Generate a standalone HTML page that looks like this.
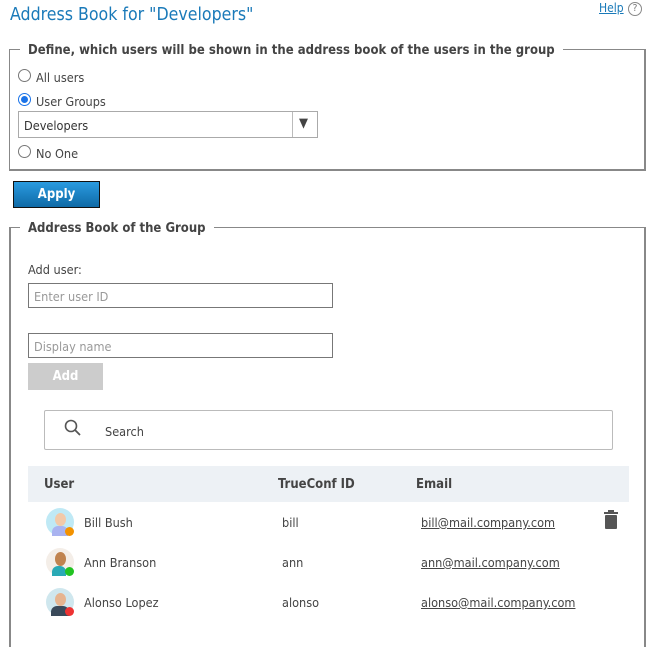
<!DOCTYPE html>
<html><head><meta charset="utf-8"><style>
*{box-sizing:border-box;margin:0;padding:0}
body{width:656px;height:624px;overflow:hidden;background:#fff;font-family:"DejaVu Sans Condensed","Liberation Sans",sans-serif;font-size:12.6px;color:#444;position:relative}
.a{position:absolute;white-space:nowrap}
.fs{position:absolute;border:1px solid #888;border-width:2px 2px 2px 2px;border-color:#888}
.lg{position:absolute;background:#fff;padding:0 8px;font-weight:bold;font-size:13px;color:#444}
.rad{position:absolute;width:13px;height:13px;border:1px solid #777;border-radius:50%;background:#fff}
.inp{position:absolute;border:1px solid #777;height:25px;color:#999;padding:5px 5px;font-size:12.6px}
.av{position:absolute;width:28px;height:28px;border-radius:50%}
.dot{position:absolute;width:9px;height:9px;border-radius:50%}
.em{text-decoration:underline;color:#444}
</style></head><body>
<div class="a" style="left:10px;top:5px;font-size:17.6px;color:#1a7ab9">Address Book for "Developers"</div>
<div class="a" style="left:599px;top:1px;color:#1a7ab9;text-decoration:underline;font-size:12px">Help</div>
<div class="a" style="left:628px;top:2px;width:14px;height:14px;border:1px solid #888;border-radius:50%;font-size:10px;text-align:center;line-height:12px;color:#777">?</div>

<div class="fs" style="left:9px;top:49px;width:637px;height:122px;border-width:1px 2px 2px 1px"></div>
<div class="lg" style="left:20px;top:43px">Define, which users will be shown in the address book of the users in the group</div>
<div class="rad" style="left:18px;top:69px"></div><div class="a" style="left:36px;top:70px">All users</div>
<div class="rad" style="left:18px;top:93px;border-color:#1a73e8"><div style="margin:2px;width:7px;height:7px;border-radius:50%;background:#1a73e8"></div></div><div class="a" style="left:36px;top:94px">User Groups</div>
<div class="a" style="left:18px;top:111px;width:300px;height:27px;border:1px solid #aaa"><span style="position:absolute;left:5px;top:6px;color:#333">Developers</span><div style="position:absolute;left:273px;top:0;width:1px;height:25px;background:#bbb"></div><span style="position:absolute;left:280px;top:4px;font-size:13px;color:#444">▼</span></div>
<div class="rad" style="left:18px;top:145px"></div><div class="a" style="left:36px;top:146px">No One</div>

<div class="a" style="left:13px;top:181px;width:87px;height:27px;border:1px solid #111;background:linear-gradient(#2a9be0,#0f6aa6);color:#fff;font-weight:bold;font-size:13px;text-align:center;line-height:25px">Apply</div>

<div class="fs" style="left:9px;top:227px;width:637px;height:420px;border-width:1px 2px 0 2px"></div>
<div class="lg" style="left:20px;top:221px">Address Book of the Group</div>
<div class="a" style="left:28px;top:262px">Add user:</div>
<div class="inp" style="left:28px;top:283px;width:305px">Enter user ID</div>
<div class="inp" style="left:28px;top:333px;width:305px">Display name</div>
<div class="a" style="left:28px;top:363px;width:75px;height:27px;background:#ccc;color:#fff;font-weight:bold;font-size:13px;text-align:center;line-height:27px">Add</div>
<div class="a" style="left:44px;top:410px;width:569px;height:40px;border:1px solid #bbb;border-radius:2px"></div>
<svg class="a" style="left:63px;top:418px" width="20" height="20" viewBox="0 0 20 20"><circle cx="8" cy="8" r="5.5" fill="none" stroke="#555" stroke-width="1.6"/><path d="M12 12L17 17" stroke="#555" stroke-width="1.8"/></svg>
<div class="a" style="left:105px;top:424px">Search</div>

<div class="a" style="left:28px;top:466px;width:601px;height:36px;background:#edf1f5"></div>
<div class="a" style="left:44px;top:477px;font-weight:bold;font-size:13px">User</div>
<div class="a" style="left:278px;top:477px;font-weight:bold;font-size:13px">TrueConf ID</div>
<div class="a" style="left:416px;top:477px;font-weight:bold;font-size:13px">Email</div>

<div class="av" style="left:46px;top:508px;background:#bfe9f5"><div style="position:absolute;left:9px;top:5px;width:11px;height:13px;border-radius:50%;background:#f2c9a8"></div><div style="position:absolute;left:6px;top:18px;width:16px;height:10px;border-radius:6px 6px 0 0;background:#a9b3f0"></div></div><div class="dot" style="left:65px;top:527px;background:#f39200"></div>
<div class="a" style="left:84px;top:515px">Bill Bush</div><div class="a" style="left:282px;top:515px">bill</div><div class="a em" style="left:421px;top:515px">bill@mail.company.com</div>
<svg class="a" style="left:603px;top:510px" width="16" height="19" viewBox="0 0 16 19"><rect x="1" y="2" width="14" height="2" fill="#555"/><rect x="5" y="0" width="6" height="2" fill="#555"/><rect x="2" y="5" width="12" height="14" rx="1" fill="#555"/></svg>

<div class="av" style="left:46px;top:548px;background:#f4eee8"><div style="position:absolute;left:9px;top:4px;width:11px;height:14px;border-radius:50%;background:#c0834f"></div><div style="position:absolute;left:6px;top:18px;width:14px;height:10px;border-radius:6px 6px 0 0;background:#2aa9b5"></div></div><div class="dot" style="left:65px;top:567px;background:#22c322"></div>
<div class="a" style="left:84px;top:555px">Ann Branson</div><div class="a" style="left:282px;top:555px">ann</div><div class="a em" style="left:421px;top:555px">ann@mail.company.com</div>

<div class="av" style="left:46px;top:588px;background:#cfe7ee"><div style="position:absolute;left:9px;top:5px;width:11px;height:13px;border-radius:50%;background:#e6b48f"></div><div style="position:absolute;left:5px;top:18px;width:18px;height:10px;border-radius:6px 6px 0 0;background:#3a4a5a"></div></div><div class="dot" style="left:65px;top:607px;background:#ee3333"></div>
<div class="a" style="left:84px;top:595px">Alonso Lopez</div><div class="a" style="left:282px;top:595px">alonso</div><div class="a em" style="left:421px;top:595px">alonso@mail.company.com</div>
</body></html>
